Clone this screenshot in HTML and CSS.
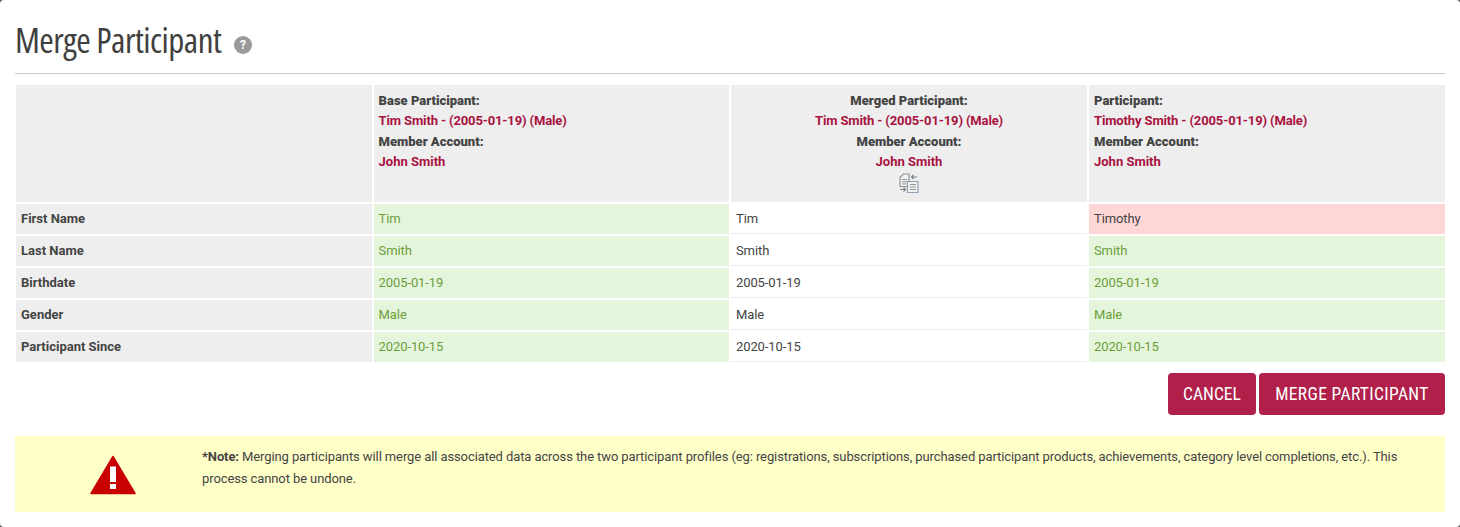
FILE: index.html
```html
<!DOCTYPE html>
<html lang="en">
<head>
<meta charset="utf-8">
<title>Merge Participant</title>
<link rel="stylesheet" href="styles.css">
</head>
<body>
<main class="modal">
  <header class="page-head">
    <h1 class="title">Merge Participant</h1>
    <svg class="help" viewBox="0 0 18 18" width="18" height="18" aria-hidden="true"><circle cx="9" cy="9" r="9" fill="#999"/><text x="9" y="13.2" text-anchor="middle" class="help-q">?</text></svg>
  </header>
  <table class="merge">
    <colgroup><col class="c1"><col class="c2"><col class="c3"><col class="c4"></colgroup>
    <thead>
      <tr>
        <th></th>
        <th><b>Base Participant:</b><span class="red tight">Tim Smith - (2005-01-19) (Male)</span><b>Member Account:</b><span class="red">John Smith</span></th>
        <th class="center"><b>Merged Participant:</b><span class="red tight">Tim Smith - (2005-01-19) (Male)</span><b>Member Account:</b><span class="red">John Smith</span>
          <svg class="swap" viewBox="0 0 20 20" width="20" height="20" aria-hidden="true">
            <path d="M1 4.500 4.500 1H10V8.500H8.500V13.500H1Z" fill="#f2f2f2" stroke="#8f9498" stroke-width="1.200"/>
            <path d="M3 6.500H8M3 8.700H8M3 10.900H7" stroke="#8f9498" stroke-width="1"/>
            <path d="M8.500 8.500H19V19.500H8.500Z" fill="#f2f2f2" stroke="#8fa3b5" stroke-width="1.200"/>
            <path d="M11 11.500H17M11 14H17M11 16.500H17" stroke="#8f9498" stroke-width="1"/>
            <path d="M18 4H12.500M14.500 2 12.500 4 14.500 6" fill="none" stroke="#7d8286" stroke-width="1.200"/>
            <path d="M1 16.500H6.500M4.500 14.500 6.500 16.500 4.500 18.500" fill="none" stroke="#7d8286" stroke-width="1.200"/>
          </svg>
        </th>
        <th><b>Participant:</b><span class="red tight">Timothy Smith - (2005-01-19) (Male)</span><b>Member Account:</b><span class="red">John Smith</span></th>
      </tr>
    </thead>
    <tbody>
      <tr><th>First Name</th><td class="same">Tim</td><td>Tim</td><td class="diff">Timothy</td></tr>
      <tr><th>Last Name</th><td class="same">Smith</td><td>Smith</td><td class="same">Smith</td></tr>
      <tr><th>Birthdate</th><td class="same">2005-01-19</td><td>2005-01-19</td><td class="same">2005-01-19</td></tr>
      <tr><th>Gender</th><td class="same">Male</td><td>Male</td><td class="same">Male</td></tr>
      <tr><th>Participant Since</th><td class="same">2020-10-15</td><td>2020-10-15</td><td class="same">2020-10-15</td></tr>
    </tbody>
  </table>
  <div class="actions">
    <button class="btn btn-cancel" type="button">CANCEL</button>
    <button class="btn btn-merge" type="button">MERGE PARTICIPANT</button>
  </div>
  <aside class="note">
    <div class="note-icon">
      <svg viewBox="0 0 46 40" width="46" height="40" aria-hidden="true"><path d="M23 1.500 45 38.500H1Z" fill="#c80000" stroke="#c80000" stroke-width="1.500" stroke-linejoin="round"/><path d="M20 11.500H26V27H20ZM20 29H26V34H20Z" fill="#fff"/></svg>
    </div>
    <p class="note-text"><b>*Note:</b> Merging participants will merge all associated data across the two participant profiles (eg: registrations, subscriptions, purchased participant products, achievements, category level completions, etc.). This process cannot be undone.</p>
  </aside>
</main>
</body>
</html>
```
FILE: styles.css
```css
* { box-sizing: border-box; }
html, body { margin: 0; height: 527px; overflow: hidden; background: #555; }
.modal {
  height: 527px;
  background: #fff;
  border-radius: 4px;
  padding: 0 15px;
  font-family: Roboto, "Liberation Sans", sans-serif;
  font-size: 13px;
  color: #444;
}
.page-head {
  height: 74px;
  border-bottom: 1px solid #ccc;
  display: flex;
  align-items: center;
  gap: 13px;
  padding: 9px 0 0 0;
}
.title {
  margin: -3px 0 0;
  font-family: "Open Sans", "Liberation Sans", sans-serif;
  font-stretch: condensed;
  font-weight: 500;
  font-size: 35px;
  letter-spacing: -0.500px;
  color: #404040;
  line-height: 44px;
}
.help { margin-top: 7px; }
.help-q { font: 700 12px Roboto, sans-serif; fill: #fff; }
.merge {
  width: 1433px;
  margin: 9px 0 0 -1px;
  border-collapse: separate;
  border-spacing: 2px;
  table-layout: fixed;
}
.c1 { width: 356px; }
.c2 { width: 355px; }
.c3 { width: 356px; }
.c4 { width: 356px; }
.merge th { background: #eee; font-weight: 700; text-align: left; padding: 0 5px; }
.merge thead th { height: 117px; vertical-align: top; padding: 6px 5px 0; line-height: 20.4px; }
.merge thead th:nth-child(2), .merge tbody td:nth-child(2) { padding-left: 4.600px; }
.merge thead th.center { text-align: center; }
.merge thead b, .merge thead .red { display: block; }
.red { color: #a8123f; }
.tight { letter-spacing: -0.130px; }
.swap { display: block; margin: 0 auto; }
.merge tbody th, .merge tbody td { height: 30px; padding: 0 5px; line-height: 30px; }
.merge tbody td { letter-spacing: -0.100px; box-shadow: inset 0 -1px 0 #eee; }
.same { background: #e5f5dc; color: #6b9e3a; }
.same, .diff { box-shadow: none !important; }
.diff { background: #ffd6d6; }
.actions { display: flex; justify-content: flex-end; gap: 3px; margin-top: 9px; }
.btn {
  height: 42px;
  border: 0;
  border-radius: 4px;
  background: #b11f4b;
  color: #fff;
  font-family: "Roboto Condensed", Roboto, sans-serif;
  font-stretch: condensed;
  font-size: 17.500px;
  letter-spacing: 0.200px;
  padding: 0;
}
.btn-cancel { width: 88px; letter-spacing: 0; }
.btn-merge { width: 186px; letter-spacing: 0.350px; }
.note {
  margin-top: 21px;
  height: 76px;
  background: #ffffc8;
  display: flex;
  align-items: flex-start;
}
.note-icon { width: 187px; padding: 19px 0 0 9px; display: flex; justify-content: center; }
.note-text { margin: 10px 30px 0 0; flex: 1; line-height: 22px; letter-spacing: -0.100px; }
```
